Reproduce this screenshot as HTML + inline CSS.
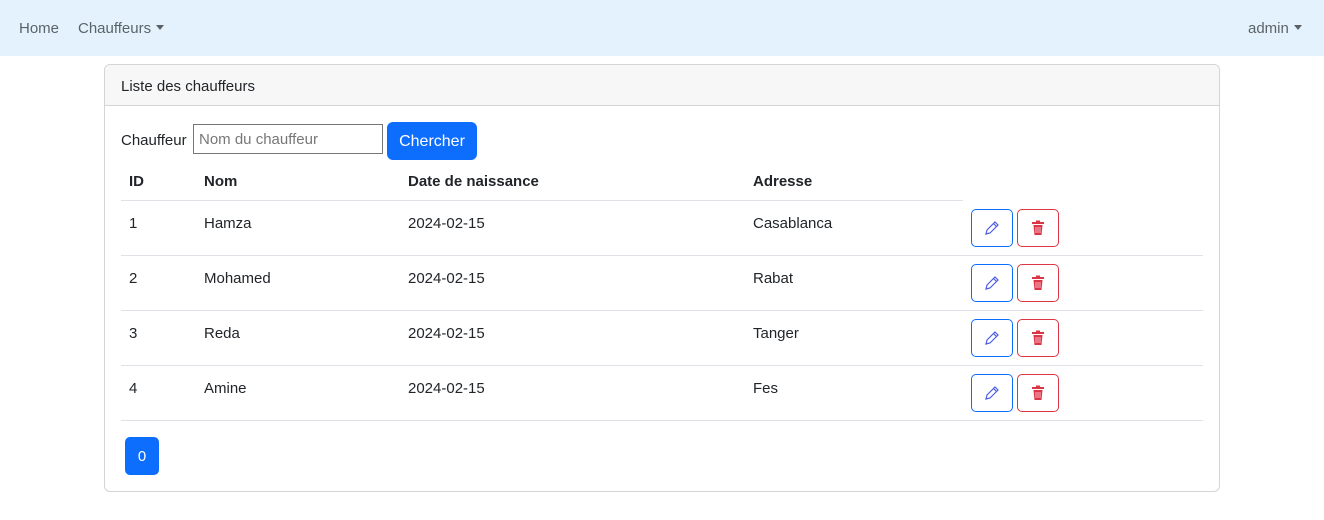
<!DOCTYPE html><html><head><style>
*{box-sizing:border-box;margin:0;padding:0}
body{width:1324px;height:520px;background:#fff;font-family:"Liberation Sans",sans-serif;font-size:15px;color:#212529;position:relative;overflow:hidden}
.a{position:absolute;white-space:nowrap}
.nav{position:absolute;left:0;top:0;width:1324px;height:56px;background:#e3f2fd}
.nl{color:rgba(0,0,0,.6);top:20px}
.caret{display:inline-block;width:0;height:0;border-left:4px solid transparent;border-right:4px solid transparent;border-top:5px solid rgba(0,0,0,.6);vertical-align:3px;margin-left:5px}
.card{position:absolute;left:104px;top:64px;width:1116px;height:428px;border:1px solid #d5d5d5;border-radius:6px;overflow:hidden}
.ch{position:absolute;left:0;top:0;width:100%;height:41px;background:#f7f7f7;border-bottom:1px solid #d5d5d5}
.line{position:absolute;height:1px;background:#dee2e6}
.b{font-weight:bold}
.t{margin-top:1px}
.btn{position:absolute;width:42px;height:38px;border-radius:5px;background:#fff;display:flex;align-items:center;justify-content:center}
.e{border:1px solid #0d6efd}.d{border:1px solid #dc3545}
</style></head><body>
<div class="nav"></div>
<div class="a nl" style="left:19px">Home</div>
<div class="a nl" style="left:78px">Chauffeurs<span class="caret"></span></div>
<div class="a nl" style="left:1248px">admin<span class="caret"></span></div>
<div class="card"><div class="ch"></div></div>
<div class="a" style="left:121px;top:78px">Liste des chauffeurs</div>
<div class="a" style="left:121px;top:132px">Chauffeur</div>
<div class="a" style="left:193px;top:124px;width:190px;height:30px;border:1px solid #767676;color:#777;padding:6px 5px 0">Nom du chauffeur</div>
<div class="a" style="left:387px;top:122px;width:90px;height:38px;background:#0d6efd;color:#fff;border-radius:6px;text-align:center;line-height:39px;font-size:16px">Chercher</div>
<div class="a b" style="left:129px;top:173px">ID</div>
<div class="a b" style="left:204px;top:173px">Nom</div>
<div class="a b" style="left:408px;top:173px">Date de naissance</div>
<div class="a b" style="left:753px;top:173px">Adresse</div>
<div class="line" style="left:121px;top:200px;width:842px"></div>
<div class="a" style="left:129px;top:215px">1</div><div class="a" style="left:204px;top:215px">Hamza</div><div class="a" style="left:408px;top:215px">2024-02-15</div><div class="a" style="left:753px;top:215px">Casablanca</div>
<div class="line" style="left:121px;top:255px;width:1082px"></div>
<div class="a" style="left:129px;top:270px">2</div><div class="a" style="left:204px;top:270px">Mohamed</div><div class="a" style="left:408px;top:270px">2024-02-15</div><div class="a" style="left:753px;top:270px">Rabat</div>
<div class="line" style="left:121px;top:310px;width:1082px"></div>
<div class="a" style="left:129px;top:325px">3</div><div class="a" style="left:204px;top:325px">Reda</div><div class="a" style="left:408px;top:325px">2024-02-15</div><div class="a" style="left:753px;top:325px">Tanger</div>
<div class="line" style="left:121px;top:365px;width:1082px"></div>
<div class="a" style="left:129px;top:380px">4</div><div class="a" style="left:204px;top:380px">Amine</div><div class="a" style="left:408px;top:380px">2024-02-15</div><div class="a" style="left:753px;top:380px">Fes</div>
<div class="line" style="left:121px;top:420px;width:1082px"></div>
<div class="btn e" style="left:971px;top:209px"><svg width="16" height="16" viewBox="0 0 16 16"><path d="M11 2l3 3-8 8-4 1 1-4z M9.5 3.5l3 3" fill="none" stroke="#4a5de0" stroke-width="1.2"/></svg></div>
<div class="btn d" style="left:1017px;top:209px"><svg width="14" height="16" viewBox="0 0 14 16"><rect x="1" y="2" width="12" height="2" fill="#dc3545"/><rect x="5" y="0.5" width="4" height="2" fill="#dc3545"/><path d="M2.5 5h9l-1 10h-7z" fill="#dc3545"/><path d="M5 7v6M7 7v6M9 7v6" stroke="#f5b8c8" stroke-width="1"/></svg></div>
<div class="btn e" style="left:971px;top:264px"><svg width="16" height="16" viewBox="0 0 16 16"><path d="M11 2l3 3-8 8-4 1 1-4z M9.5 3.5l3 3" fill="none" stroke="#4a5de0" stroke-width="1.2"/></svg></div>
<div class="btn d" style="left:1017px;top:264px"><svg width="14" height="16" viewBox="0 0 14 16"><rect x="1" y="2" width="12" height="2" fill="#dc3545"/><rect x="5" y="0.5" width="4" height="2" fill="#dc3545"/><path d="M2.5 5h9l-1 10h-7z" fill="#dc3545"/><path d="M5 7v6M7 7v6M9 7v6" stroke="#f5b8c8" stroke-width="1"/></svg></div>
<div class="btn e" style="left:971px;top:319px"><svg width="16" height="16" viewBox="0 0 16 16"><path d="M11 2l3 3-8 8-4 1 1-4z M9.5 3.5l3 3" fill="none" stroke="#4a5de0" stroke-width="1.2"/></svg></div>
<div class="btn d" style="left:1017px;top:319px"><svg width="14" height="16" viewBox="0 0 14 16"><rect x="1" y="2" width="12" height="2" fill="#dc3545"/><rect x="5" y="0.5" width="4" height="2" fill="#dc3545"/><path d="M2.5 5h9l-1 10h-7z" fill="#dc3545"/><path d="M5 7v6M7 7v6M9 7v6" stroke="#f5b8c8" stroke-width="1"/></svg></div>
<div class="btn e" style="left:971px;top:374px"><svg width="16" height="16" viewBox="0 0 16 16"><path d="M11 2l3 3-8 8-4 1 1-4z M9.5 3.5l3 3" fill="none" stroke="#4a5de0" stroke-width="1.2"/></svg></div>
<div class="btn d" style="left:1017px;top:374px"><svg width="14" height="16" viewBox="0 0 14 16"><rect x="1" y="2" width="12" height="2" fill="#dc3545"/><rect x="5" y="0.5" width="4" height="2" fill="#dc3545"/><path d="M2.5 5h9l-1 10h-7z" fill="#dc3545"/><path d="M5 7v6M7 7v6M9 7v6" stroke="#f5b8c8" stroke-width="1"/></svg></div>
<div class="a" style="left:125px;top:437px;width:34px;height:38px;background:#0d6efd;color:#fff;border-radius:5px;text-align:center;padding-top:11px;font-family:'Liberation Sans',sans-serif;font-size:15px">0</div>
</body></html>
